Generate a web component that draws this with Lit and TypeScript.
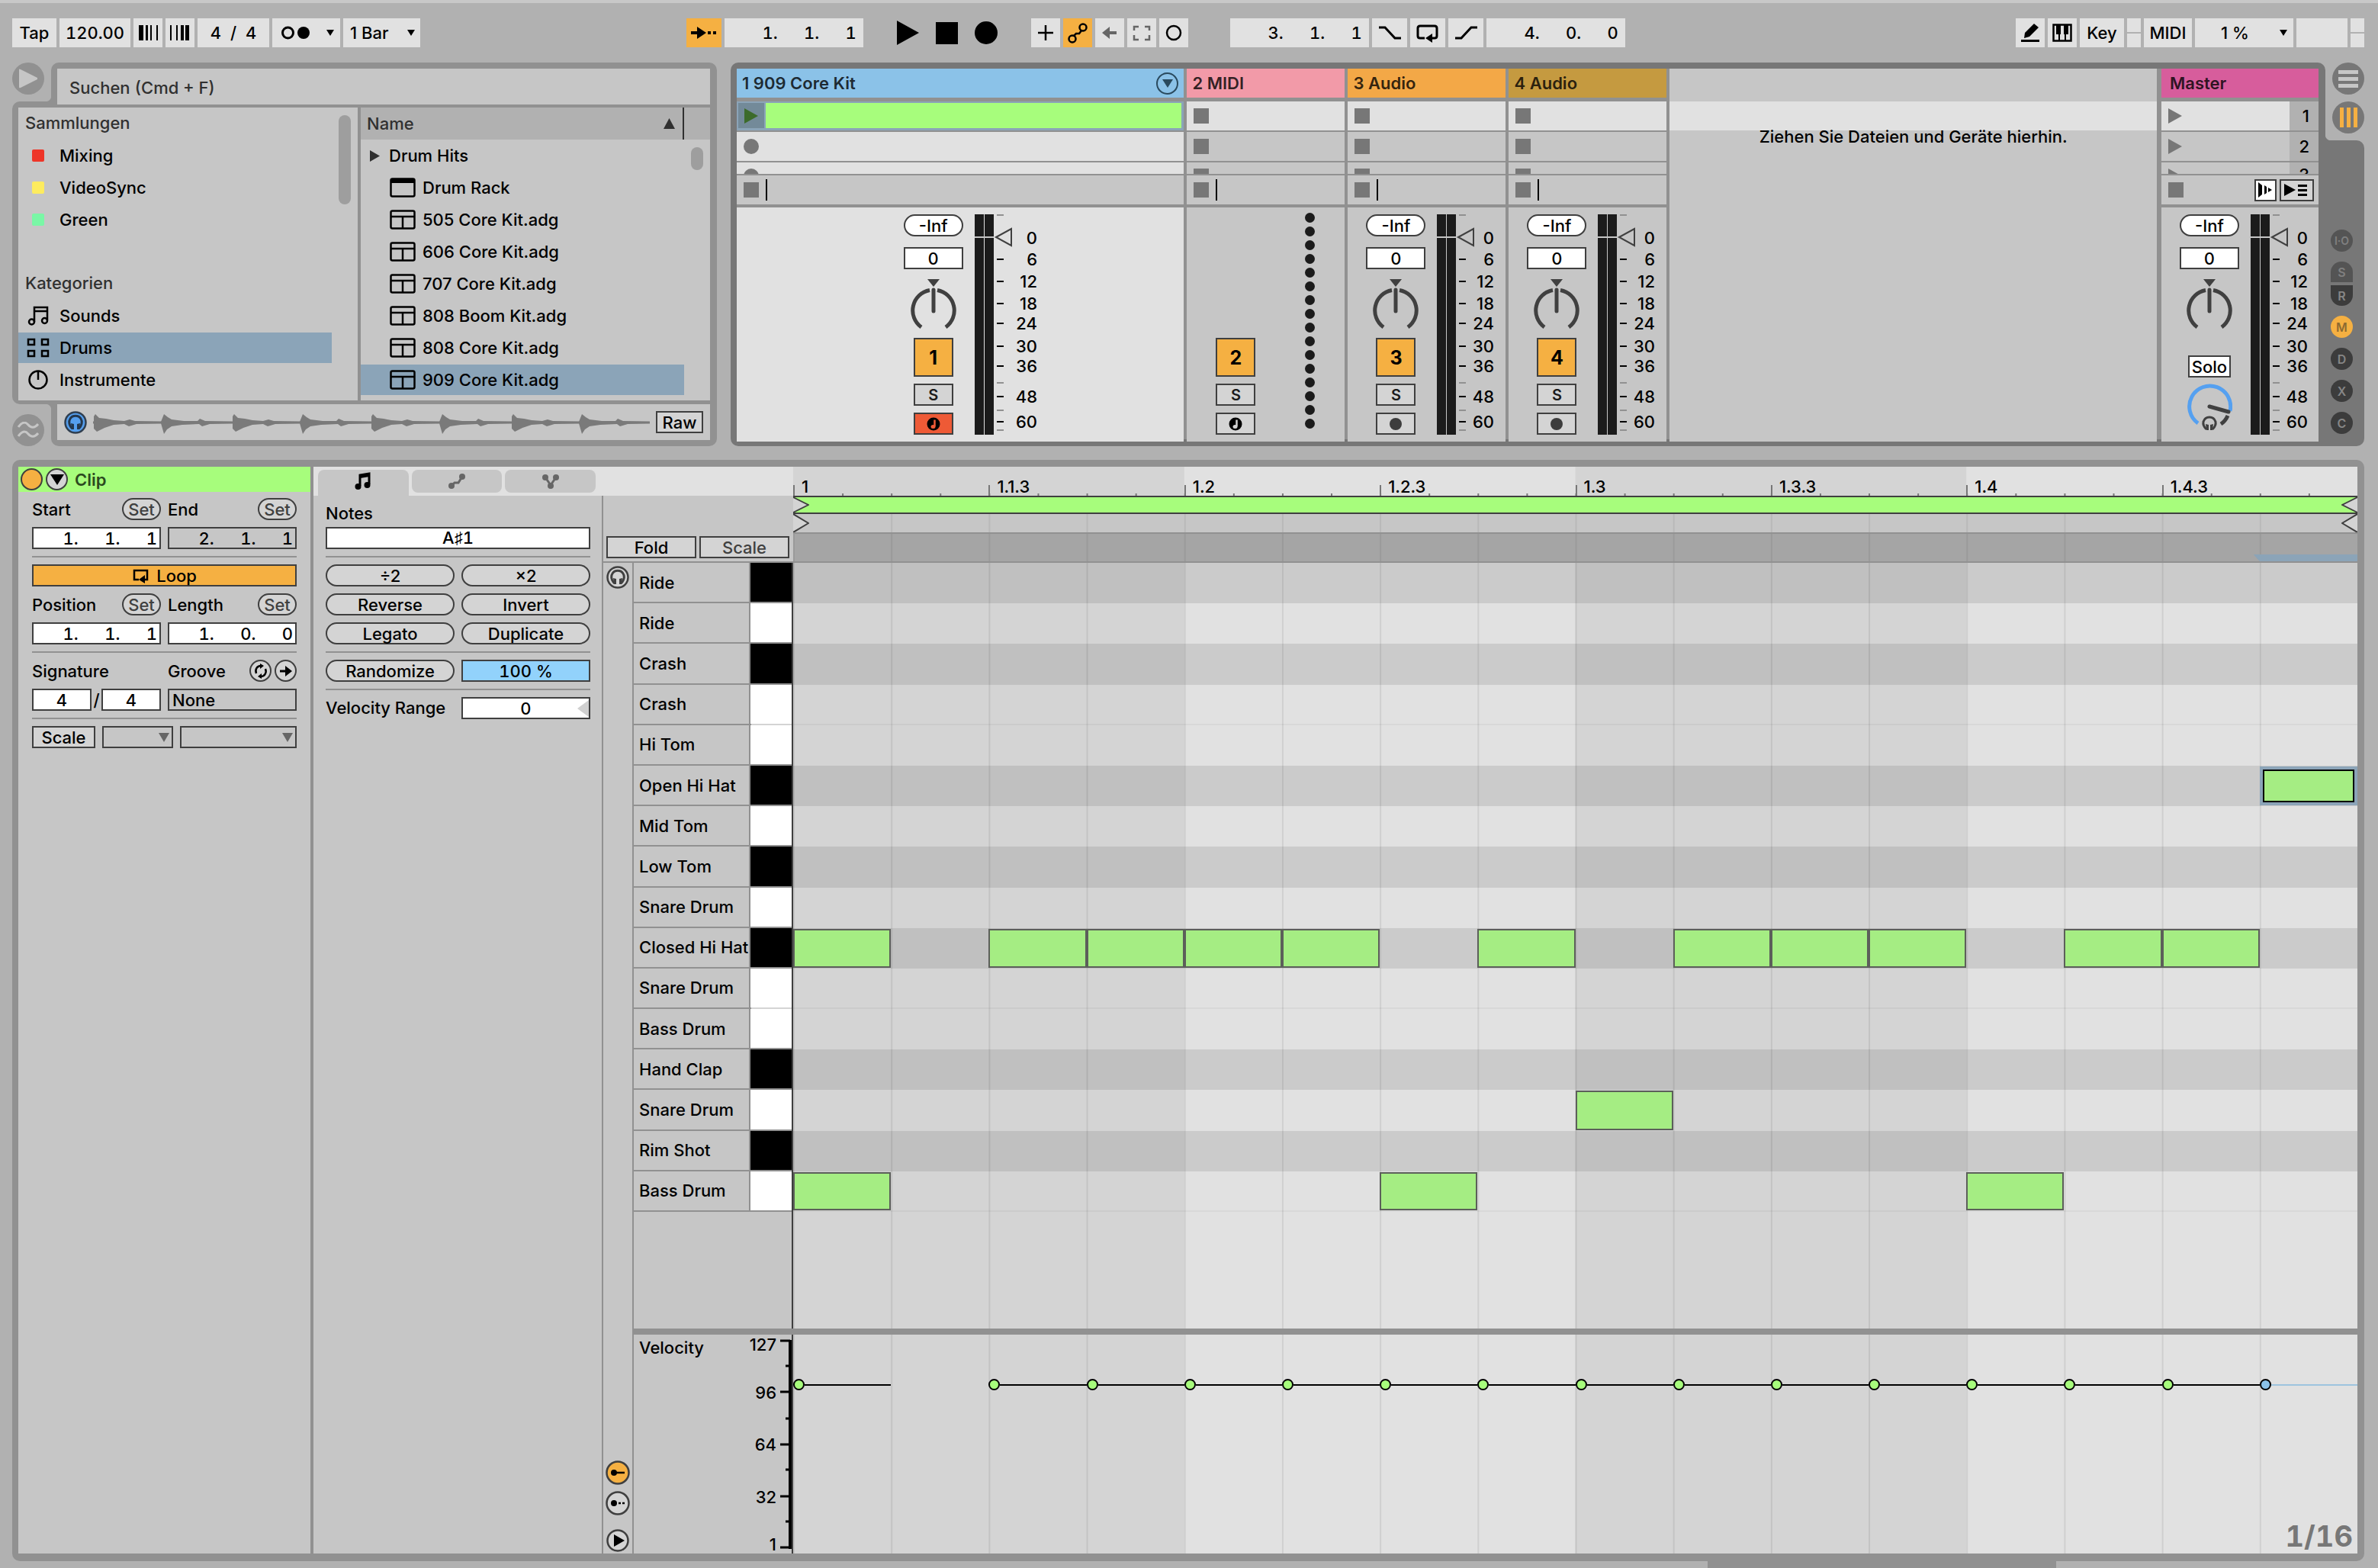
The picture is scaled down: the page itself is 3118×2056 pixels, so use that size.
import { LitElement, html, css, svg, nothing } from "lit";
import { customElement } from "lit/decorators.js";
import { classMap } from "lit/directives/class-map.js";

/* ---------- data ---------- */

const LANES: { name: string; black: boolean; steps: number[] }[] = [
  { name: "Ride", black: true, steps: [] },
  { name: "Ride", black: false, steps: [] },
  { name: "Crash", black: true, steps: [] },
  { name: "Crash", black: false, steps: [] },
  { name: "Hi Tom", black: false, steps: [] },
  { name: "Open Hi Hat", black: true, steps: [15] },
  { name: "Mid Tom", black: false, steps: [] },
  { name: "Low Tom", black: true, steps: [] },
  { name: "Snare Drum", black: false, steps: [] },
  { name: "Closed Hi Hat", black: true, steps: [0, 2, 3, 4, 5, 7, 9, 10, 11, 13, 14] },
  { name: "Snare Drum", black: false, steps: [] },
  { name: "Bass Drum", black: false, steps: [] },
  { name: "Hand Clap", black: true, steps: [] },
  { name: "Snare Drum", black: false, steps: [8] },
  { name: "Rim Shot", black: true, steps: [] },
  { name: "Bass Drum", black: false, steps: [0, 6, 12] },
];

const SELECTED_STEP = 15;
const VELOCITY_STEPS = [0, 2, 3, 4, 5, 6, 7, 8, 9, 10, 11, 12, 13, 14, 15];
const RULER = ["1", "1.1.3", "1.2", "1.2.3", "1.3", "1.3.3", "1.4", "1.4.3"];
const FILES = ["505 Core Kit.adg", "606 Core Kit.adg", "707 Core Kit.adg", "808 Boom Kit.adg", "808 Core Kit.adg", "909 Core Kit.adg"];

/* Bars, beats and sixteenths sit in columns: two figure spaces and a word space after each point. */
const position = (...parts: string[]) => parts.join(".\u2007\u2007 ");

/* ---------- icons ---------- */

const icon = (w: number, h: number, body: unknown) =>
  html`<svg width=${w} height=${h} viewBox="0 0 ${w} ${h}" fill="none" stroke="currentColor" stroke-width="2.5" aria-hidden="true">${body}</svg>`;

const nudgeDown = () => icon(38, 38, svg`<g fill="currentColor" stroke="none"><path d="M7 9h6v20H7zM16 9h3v20h-3zM22 9h2v20h-2zM30 9h2v20h-2z"/></g>`);
const nudgeUp = () => icon(38, 38, svg`<g fill="currentColor" stroke="none"><path d="M6 9h2v20H6zM14 9h2v20h-2zM20 9h4v20h-4zM26 9h5v20h-5z"/></g>`);
const caret = (w = 10, h = 8) => html`<svg class="caret" width=${w} height=${h} viewBox="0 0 10 8" preserveAspectRatio="none" aria-hidden="true"><path d="M0 0H10L5 8Z" fill="currentColor"/></svg>`;
const metronome = () => icon(38, 20, svg`<circle cx="8.500" cy="10" r="7" stroke-width="3"/><circle cx="29" cy="10" r="8" fill="currentColor" stroke="none"/>`);
const follow = () => icon(46, 38, svg`<path d="M6 19H18" stroke-width="4"/><path d="M14 11L26 19L14 27Z" fill="currentColor" stroke="none"/><path d="M28 19h4M35 19h4" stroke-width="4"/>`);
const plus = () => icon(38, 38, svg`<path d="M19 9V29M9 19H29"/>`);
const automation = () => icon(38, 38, svg`<circle cx="26" cy="12" r="4.500"/><circle cx="12" cy="27" r="4.500"/><path d="M14 23L17 20H21L24 16"/>`);
const reenable = () => icon(38, 38, svg`<g stroke="#666" fill="#666"><path d="M15 19H28" stroke-width="4"/><path d="M9 19L19 11V27Z" stroke="none"/></g>`);
const capture = () => icon(38, 38, svg`<path d="M9 16V11H15M23 11H29V16M29 22V28H23M15 28H9V22" stroke="#666"/>`);
const ring = () => icon(38, 38, svg`<circle cx="19" cy="19" r="9"/>`);
const punchIn = () => icon(46, 38, svg`<path d="M9 12H17L30 26H38" stroke-width="3"/>`);
const punchOut = () => icon(46, 38, svg`<path d="M9 26H17L30 12H38" stroke-width="3"/>`);
const loopIcon = () => icon(46, 38, svg`<path d="M19 26H13Q10 26 10 23V13Q10 10 13 10H32Q35 10 35 13V23Q35 26 32 26H29" stroke-width="3"/><path d="M29 20V32L20 26Z" fill="currentColor" stroke="none"/>`);
const loopSmall = () => icon(24, 20, svg`<path d="M9 15H3V3H20V15H15"/><path d="M17 9V20L9 15Z" fill="currentColor" stroke="none"/>`);
const pencil = () => icon(38, 38, svg`<path d="M7 29.500H31" stroke-width="3"/><path d="M11 26L12 19L24 7L30 12L18 24Z" fill="currentColor" stroke="none"/>`);
const keyboard = () => icon(38, 38, svg`<rect x="7.500" y="8.500" width="23" height="21"/><path d="M15 19V30M23 19V30" stroke-width="2"/><path d="M11 8H17V21H11zM21 8H27V21H21z" fill="currentColor" stroke="none"/>`);
const headphones = (stroke: string, fill: string, inner: string) => html`<svg width="30" height="30" viewBox="0 0 30 30" fill="none" aria-hidden="true"><circle cx="15" cy="15" r="13.500" fill=${fill} stroke=${stroke} stroke-width="2.500"/><path d="M11 23C6 19 6 13 8 10C11 5 19 5 22 10C24 13 24 19 19 23" stroke=${inner} stroke-width="3"/><path d="M9 16L13 17V24H10ZM21 16L17 17V24H20Z" fill=${inner}/></svg>`;
const rackIcon = () => icon(34, 26, svg`<rect x="1.500" y="1.500" width="31" height="23" rx="2"/><path d="M2 2H32V7H2Z" fill="currentColor" stroke="none"/>`);
const kitIcon = () => icon(34, 26, svg`<rect x="1.500" y="1.500" width="31" height="23" rx="2"/><path d="M2 9H32M17 9V24"/>`);
const notesIcon = () => icon(30, 26, svg`<path d="M10 21V2H27V19M10 7H27"/><circle cx="6.500" cy="21" r="3.500"/><circle cx="23.500" cy="19.500" r="3.500"/>`);
const padsIcon = () => icon(30, 26, svg`<path d="M2 2H10V9H2zM20 2H28V9H20zM2 17H10V24H2zM20 17H28V24H20z"/>`);
const dialIcon = () => icon(30, 26, svg`<circle cx="15" cy="13" r="11.500"/><path d="M15 2V13"/>`);
const noteTab = () => icon(26, 24, svg`<path d="M9 18V4L21 2V16" stroke-width="3"/><path d="M9 6L21 4" stroke-width="4"/><circle cx="6.500" cy="19" r="4" fill="currentColor" stroke="none"/><circle cx="18.500" cy="17" r="4" fill="currentColor" stroke="none"/>`);
const envelopeTab = () => icon(24, 22, svg`<g fill="currentColor"><circle cx="5" cy="17" r="4" stroke="none"/><circle cx="19" cy="5" r="4" stroke="none"/></g><path d="M5 17L9 13H14L19 5" stroke-width="3"/>`);
const chanceTab = () => icon(24, 20, svg`<g fill="currentColor" stroke="none"><circle cx="5" cy="5" r="4"/><circle cx="19" cy="5" r="4"/><circle cx="12" cy="16" r="4"/></g><path d="M5 5L12 15L19 5" stroke-width="3"/>`);
const playTri = (fill: string) => html`<svg width="18" height="20" viewBox="0 0 18 20" aria-hidden="true"><path d="M0 0L18 10L0 20Z" fill=${fill}/></svg>`;
const armMidi = () => html`<svg width="18" height="18" viewBox="0 0 18 18" aria-hidden="true"><circle cx="9" cy="9" r="8.500" fill="#000"/><path d="M10.500 3.500V12" stroke="currentColor" stroke-width="2.500"/><ellipse cx="8.500" cy="12.500" rx="3" ry="2.500" fill="currentColor"/></svg>`;
const armAudio = () => html`<svg width="18" height="18" viewBox="0 0 18 18" aria-hidden="true"><circle cx="9" cy="9" r="8" fill="#3d3d3d"/></svg>`;
const panKnob = () => html`<svg width="60" height="66" viewBox="0 0 60 66" fill="none" stroke="#404040" aria-hidden="true"><path d="M22 0H38L30 10Z" fill="#404040" stroke="none"/><path d="M14 63A27 27 0 0 1 25 14.500M35 14.500A27 27 0 0 1 46 63" stroke-width="5"/><path d="M30 14V42" stroke-width="5" stroke-linecap="round"/></svg>`;
const cueKnob = () => html`<svg width="60" height="66" viewBox="0 0 60 66" fill="none" aria-hidden="true"><path d="M15 53A27 27 0 1 1 57 37" stroke="#55a0f0" stroke-width="5"/><path d="M30 31L55 38" stroke="#404040" stroke-width="5" stroke-linecap="round"/><path d="M54 43Q51 50 45 54" stroke="#404040" stroke-width="5"/><path d="M26 61Q21 56 22 51Q24 45 30 45Q36 45 38 51Q39 56 34 61" stroke="#404040" stroke-width="3"/><path d="M25 54L29 55V62H26ZM35 54L31 55V62H34Z" fill="#404040"/></svg>`;

/* A level meter with its decibel scale. `w` leaves more room for the numbers on a wide track. */
const SCALE: [string, number][] = [["0", 31], ["6", 59], ["12", 88], ["18", 117], ["24", 143], ["30", 173], ["36", 199], ["48", 239], ["60", 272]];
const meter = (w: number) => html`<svg class="meter" width=${w} height="289" viewBox="0 0 ${w} 289" aria-label="Pegel">
  <path d="M0 0H12V289H0zM13 0H25V289H13z" fill="#1b1b1b"/>
  <path d="M0 30H25" stroke="#c6c6c6" stroke-width="2"/>
  <path d="M28 30L48 19V41Z" fill="none" stroke="#404040" stroke-width="2"/>
  ${SCALE.map(([label, y]) => svg`${label === "0" ? nothing : svg`<path d="M29 ${y}h9" stroke="#000" stroke-width="2"/>`}
    <text x=${w} y=${y} text-anchor="end" dominant-baseline="central">${label}</text>`)}
  ${[1, 221, 257, 283].map((y) => svg`<path d="M29 ${y}h9" stroke="#919191" stroke-width="2"/>`)}
</svg>`;

const waveform = () => {
  const hit = (x: number, soft: boolean) => soft
    ? `M${x - 4} 19L${x} 9L${x + 5} 13L${x + 10} 16L${x + 26} 18L${x + 44} 18L${x + 47} 15L${x + 54} 18L${x + 90} 19V21L${x + 60} 22L${x + 50} 25L${x + 46} 22L${x + 24} 23L${x + 10} 25L${x + 4} 29L${x} 35L${x - 4} 21Z`
    : `M${x} 20V12L${x + 2} 9L${x + 7} 14L${x + 16} 15L${x + 26} 17L${x + 40} 18L${x + 47} 16L${x + 54} 18L${x + 90} 19V21L${x + 56} 22L${x + 46} 25L${x + 40} 22L${x + 26} 23L${x + 14} 27L${x + 4} 32L${x} 28Z`;
  return html`<svg class="wave" viewBox="0 0 730 40" preserveAspectRatio="none" aria-hidden="true"><path d="M0 20H730" stroke="#7a7a7a" stroke-width="3"/>${[0, 92, 182, 274, 364, 457, 548, 640].map((x, i) => svg`<path d=${hit(x + 1, i % 2 === 1)} fill="#7a7a7a"/>`)}</svg>`;
};

/* ---------- shared styles ---------- */

const base = css`
  :host { display: block; min-width: 0; }
  * { box-sizing: border-box; }
  button, input, select { font: inherit; color: inherit; margin: 0; padding: 0; border: 0; border-radius: 0; background: none; appearance: none; min-width: 0; outline: none; }
  button { display: flex; align-items: center; justify-content: center; white-space: nowrap; }
  svg { display: block; flex: none; }
  .box { height: 29px; border: 2px solid #3f3f3f; background: #d4d4d4; }
  .white { background: #fff; }
  .pill { border-radius: 15px; }
  .orange { background: #f5b042; }
  input { white-space: pre; font-variant-numeric: tabular-nums; }
`;

/* ---------- transport ---------- */

@customElement("live-transport")
export class LiveTransport extends LitElement {
  static styles = [base, css`
    .bar { display: flex; height: 78px; padding: 20px 18px 0 16px; border-top: 4px solid #c8c8c8; align-items: flex-start; }
    .group { display: flex; gap: 4px; }
    .cell { height: 38px; background: #e1e1e1; }
    .orange { background: #f5b042; }
    .s38 { width: 38px; }
    .s46 { width: 46px; }
    .tap { width: 58px; }
    .tempo { width: 93px; text-align: center; }
    .sig { width: 94px; text-align: center; }
    .click { width: 89px; justify-content: space-between; padding: 0 8px 0 12px; }
    .drop { display: grid; align-items: center; }
    .drop > * { grid-area: 1 / 1; }
    .drop .caret { justify-self: end; margin-right: 7px; pointer-events: none; }
    .drop select { height: 38px; width: 100%; }
    .bars { width: 101px; padding-left: 9px; }
    .cpu { width: 129px; }
    .cpu select { padding-left: 34px; }
    .cpu .caret { margin-right: 8px; }
    .pos { width: 182px; text-align: right; padding-right: 9px; }
    .keys { display: flex; gap: 22px; padding: 0 44px; height: 38px; align-items: center; }
    .gap-left { flex: 348; }
    .gap-right { flex: 511; }
    .gap-loop { width: 47px; }
    .key { width: 58px; }
    .midi { width: 63px; }
    .led { width: 18px; height: 38px; display: grid; gap: 2px; grid-template-rows: 1fr 1fr; }
    .led i { background: #e1e1e1; }
    .disk { width: 67px; }
  `];
  render() {
    return html`<header class="bar">
      <div class="group">
        <button class="cell tap">Tap</button>
        <input class="cell tempo" aria-label="Tempo" value="120.00">
        <button class="cell s38" aria-label="Langsamer">${nudgeDown()}</button>
        <button class="cell s38" aria-label="Schneller">${nudgeUp()}</button>
        <input class="cell sig" aria-label="Taktart" value="4  /  4">
        <button class="cell click" aria-label="Metronom">${metronome()}${caret()}</button>
        <label class="cell drop bars"><select aria-label="Quantisierung"><option>1 Bar</option></select>${caret()}</label>
      </div>
      <div class="gap-left"></div>
      <div class="group">
        <button class="cell s46 orange" aria-label="Folgen">${follow()}</button>
        <input class="cell pos" aria-label="Position" value=${position("1", "1", "1")}>
      </div>
      <div class="keys">
        <button aria-label="Wiedergabe"><svg width="29" height="32" viewBox="0 0 29 32"><path d="M0 0L29 16L0 32Z"/></svg></button>
        <button aria-label="Stopp"><svg width="29" height="29" viewBox="0 0 29 29"><path d="M0 0H29V29H0Z"/></svg></button>
        <button aria-label="Aufnahme"><svg width="30" height="30" viewBox="0 0 30 30"><circle cx="15" cy="15" r="15"/></svg></button>
      </div>
      <div class="group">
        <button class="cell s38" aria-label="Overdub">${plus()}</button>
        <button class="cell s38 orange" aria-label="Automation">${automation()}</button>
        <button class="cell s38" aria-label="Automation reaktivieren">${reenable()}</button>
        <button class="cell s38" aria-label="Capture">${capture()}</button>
        <button class="cell s38" aria-label="Session-Aufnahme">${ring()}</button>
        <div class="gap-loop"></div>
        <input class="cell pos" aria-label="Loop-Start" value=${position("3", "1", "1")}>
        <button class="cell s46" aria-label="Punch-In">${punchIn()}</button>
        <button class="cell s46" aria-label="Loop">${loopIcon()}</button>
        <button class="cell s46" aria-label="Punch-Out">${punchOut()}</button>
        <input class="cell pos" aria-label="Loop-Länge" value=${position("4", "0", "0")}>
      </div>
      <div class="gap-right"></div>
      <div class="group">
        <button class="cell s38" aria-label="Stift">${pencil()}</button>
        <button class="cell s38" aria-label="Tastatur">${keyboard()}</button>
        <button class="cell key">Key</button>
        <div class="led"><i></i><i></i></div>
        <button class="cell midi">MIDI</button>
        <label class="cell drop cpu"><select aria-label="CPU"><option>1 %</option></select>${caret()}</label>
        <div class="cell disk"></div>
        <div class="led"><i></i><i></i></div>
      </div>
    </header>`;
  }
}

/* ---------- browser ---------- */

@customElement("live-browser")
export class LiveBrowser extends LitElement {
  static styles = [base, css`
    .line { display: flex; }
    .corner { width: 51px; flex: none; display: flex; }
    .corner.top { align-items: flex-start; background: radial-gradient(circle at 0 0, transparent 8px, #919191 9px) right bottom / 8px 8px no-repeat; }
    .corner.bottom { align-items: flex-end; background: radial-gradient(circle at 0 100%, transparent 8px, #919191 9px) right top / 8px 8px no-repeat; }
    .round { width: 42px; height: 42px; border-radius: 50%; background: #919191; }
    .search, .preview { flex: 1; min-width: 0; background: #919191; }
    .search { position: relative; padding: 8px 9px 0 8px; border-radius: 10px 10px 0 0; height: 51px; }
    .search input { display: block; width: 100%; height: 47px; background: #c6c6c6; padding: 2px 16px 0; }
    .search input::placeholder { color: #303030; opacity: 1; }
    .preview { padding: 0 9px 8px 8px; border-radius: 0 0 10px 10px; }
    .inner { display: flex; align-items: center; gap: 8px; height: 47px; background: #c6c6c6; padding: 0 9px; }
    .wave { flex: 1; min-width: 0; height: 40px; }
    .raw { width: 62px; }
    .body { display: grid; grid-template-columns: minmax(0, 445fr) minmax(0, 458fr); gap: 4px; background: #919191; padding: 8px 9px 5px 8px; border-radius: 10px 0 0 10px; height: 397px; }
    .pane { background: #c6c6c6; display: grid; grid-template-columns: minmax(0, 1fr) 34px; align-content: start; height: 384px; }
    .thumb { width: 16px; border-radius: 8px; background: #9e9e9e; justify-self: center; margin-top: 10px; }
    .tall { height: 117px; }
    .short { height: 30px; }
    ul { list-style: none; margin: 0; padding: 0; }
    li { height: 42px; padding: 1px 0; }
    li button { width: 100%; height: 40px; justify-content: flex-start; }
    .head { color: #303030; padding: 0 9px; line-height: 41px; }
    .ico { width: 34px; margin: 0 11px 0 9px; display: flex; justify-content: center; flex: none; }
    .cat { padding-left: 0; }
    .sw { width: 16px; height: 16px; border-radius: 2px; }
    .on { background: #8ba4b8; }
    .red { background: #ee3528; } .yellow { background: #fdec5f; } .mint { background: #7af7a6; }
    .title { height: 42px; background: #b1b1b1; color: #303030; display: flex; align-items: center; justify-content: space-between; padding: 0 10px 0 8px; border-right: 2px solid #303030; }
    .rest { background: #b1b1b1; }
    .folder { padding-left: 12px; gap: 12px; }
    .file { padding-left: 38px; gap: 9px; }
  `];
  render() {
    const cat = (name: string, ico: unknown, on = false) =>
      html`<li><button class=${classMap({ cat: true, on })}><span class="ico">${ico}</span>${name}</button></li>`;
    return html`<section aria-label="Browser">
      <div class="line">
        <div class="corner top"><button class="round" aria-label="Browser zeigen"><svg width="24" height="26" viewBox="0 0 24 26"><path d="M0 1Q0 0 2 1L24 12V14L2 25Q0 26 0 24Z" fill="#c6c6c6"/></svg></button></div>
        <div class="search"><input type="search" aria-label="Suchen" placeholder="Suchen (Cmd + F)"></div>
      </div>
      <div class="body">
        <div class="pane">
          <ul>
            <li class="head">Sammlungen</li>
            ${cat("Mixing", html`<i class="sw red"></i>`)}
            ${cat("VideoSync", html`<i class="sw yellow"></i>`)}
            ${cat("Green", html`<i class="sw mint"></i>`)}
            <li></li>
            <li class="head">Kategorien</li>
            ${cat("Sounds", notesIcon())}
            ${cat("Drums", padsIcon(), true)}
            ${cat("Instrumente", dialIcon())}
          </ul>
          <div class="thumb tall"></div>
        </div>
        <div class="pane">
          <div class="title">Name<svg width="15" height="14" viewBox="0 0 15 14"><path d="M0 14L7.500 0L15 14Z" fill="#303030"/></svg></div>
          <div class="rest"></div>
          <ul>
            <li><button class="folder"><svg width="13" height="15" viewBox="0 0 13 15"><path d="M0 0L13 7.500L0 15Z" fill="#303030"/></svg>Drum Hits</button></li>
            <li><button class="file">${rackIcon()}Drum Rack</button></li>
            ${FILES.map((f, i) => html`<li><button class=${classMap({ file: true, on: i === FILES.length - 1 })}>${kitIcon()}${f}</button></li>`)}
          </ul>
          <div class="thumb short"></div>
        </div>
      </div>
      <div class="line">
        <div class="corner bottom"><button class="round" aria-label="Groove-Pool"><svg width="28" height="22" viewBox="0 0 28 22" fill="none" stroke="#c6c6c6" stroke-width="3"><path d="M1 7Q8 -3 14 4T27 3M1 19Q8 9 14 16T27 15"/></svg></button></div>
        <div class="preview"><div class="inner">
          <button aria-label="Vorhören">${headphones("#303f50", "#559fee", "#24374c")}</button>
          ${waveform()}
          <button class="box raw">Raw</button>
        </div></div>
      </div>
    </section>`;
  }
}

/* ---------- mixer ---------- */

@customElement("live-session")
export class LiveSession extends LitElement {
  static styles = [base, css`
    .frame { display: grid; grid-template-columns: minmax(0, 1fr) 51px; height: 503px; }
    .panel { background: #777; border-radius: 10px 10px 0 10px; padding: 8px 9px 9px 8px; }
    .tracks { display: grid; grid-template-columns: minmax(0, 586fr) 207px 207px 207px minmax(0, 640fr) 206px; column-gap: 4px; background: #919191; height: 486px; }
    .track { display: flex; flex-direction: column; min-width: 0; }
    .title { height: 38px; margin-bottom: 5px; padding: 0 7px; display: flex; align-items: center; justify-content: space-between; font-weight: 600; color: #0009; flex: none; }
    .title span { color: #000c; }
    .blue { background: #8bc2e8; } .pink { background: #f29aa8; } .amber { background: #f3a847; } .ochre { background: #c59a40; }
    .magenta { background: #d75d9c; padding-left: 11px; }
    .fold { width: 29px; height: 29px; border-radius: 50%; border: 2px solid #2a4a5e; color: #2a4a5e; }
    .slot { height: 38px; margin-bottom: 2px; background: #c6c6c6; display: flex; align-items: center; padding-left: 9px; flex: none; }
    .slot.lit { background: #e1e1e1; }
    .slot.cut { height: 15px; align-items: flex-start; padding-top: 8px; overflow: hidden; }
    .slot.stop { margin-bottom: 4px; gap: 9px; }
    .slot.clip { padding: 2px 3px 3px 2px; background: #8ba4b8; gap: 2px; }
    .launch { width: 34px; height: 33px; background: #738a99; }
    .green { flex: 1; height: 33px; background: #a7fd7c; }
    .sq { width: 20px; height: 20px; background: #777; flex: none; }
    .dot { border-radius: 50%; }
    .cursor { width: 2px; height: 28px; background: #000; }
    .strip { flex: 1; display: flex; background: #c6c6c6; padding: 9px 14px 0 24px; align-items: flex-start; }
    .strip.wide { background: #e1e1e1; justify-content: center; padding: 9px 0 0 26px; }
    .controls { width: 78px; display: flex; flex-direction: column; align-items: center; margin-right: 15px; }
    .controls .val { width: 78px; text-align: center; margin-bottom: 13px; }
    .inf { width: 78px; margin-bottom: 14px; }
    .num { width: 52px; height: 51px; border: 2px solid #3f3f3f; background: #f5b042; font-size: 25px; font-weight: 700; margin: 11px 0 9px; }
    .small { width: 52px; font-size: 20px; font-weight: 600; margin-bottom: 9px; color: #1b1b1b; }
    .arm { color: #d4d4d4; }
    .arm.red { background: #ee5a36; color: #ee5a36; }
    .meter { font-size: 22px; }
    .midi { display: flex; flex: 1; background: #c6c6c6; padding: 7px 0 0 38px; align-items: flex-start; }
    .midi .controls { width: 52px; margin: 153px 65px 0 0; }
    .leds { display: grid; gap: 5px; }
    .leds i { width: 13px; height: 13px; border-radius: 50%; background: #1b1b1b; }
    .drop { background: #c6c6c6; padding-top: 43px; margin-right: 2px; text-align: center; }
    .drop div { height: 38px; background: #e1e1e1; }
    .drop p { margin: 0; line-height: 16px; }
    .scene { padding-right: 0; justify-content: space-between; }
    .scene b { width: 38px; align-self: stretch; background: #b1b1b1; font-weight: 500; display: flex; align-items: center; justify-content: flex-end; padding-right: 12px; }
    .scene.cut b { margin-top: -8px; align-items: flex-start; line-height: 22px; padding-top: 5px; }
    .gap { flex: 1; }
    .b1 { width: 29px; } .b2 { width: 45px; margin: 0 6px 0 4px; }
    .slot.stop.master { gap: 0; }
    .solo { width: 56px; margin: 34px 0 7px; }
    .side { display: flex; flex-direction: column; }
    .side .round { width: 42px; height: 42px; border-radius: 50%; background: #777; margin: 0 0 9px 9px; }
    .modes { flex: 1; background: #777; border-radius: 0 10px 10px 0; display: flex; flex-direction: column; align-items: center; padding: 117px 8px 0 0; }
    .modes button { width: 29px; height: 29px; border-radius: 50%; background: #3c3c3c; color: #868686; font-size: 16px; font-weight: 600; margin-bottom: 13px; flex: none; }
    .modes .dim { background: #545454; color: #808080; }
    .modes .io { font-size: 14px; }
    .modes .s { border-radius: 14px 14px 0 0; height: 27px; margin-bottom: 4px; }
    .modes .r { border-radius: 0 0 14px 14px; height: 27px; }
    .modes .m { background: #f5b042; color: #8d6a31; }
    .elbow { height: 0; }
    .elbow i { display: block; width: 8px; height: 8px; margin-top: -8px; background: radial-gradient(circle at 100% 0, transparent 8px, #777 9px); }
  `];
  private slots(main: boolean) {
    const sq = html`<i class="sq"></i>`;
    return html`
      ${main
        ? html`<div class="slot clip"><button class="launch" aria-label="Clip starten">${playTri("#3c6b2b")}</button><div class="green"></div></div>
          <div class="slot lit"><i class="sq dot"></i></div><div class="slot lit cut"><i class="sq dot"></i></div>`
        : html`<div class="slot lit">${sq}</div><div class="slot">${sq}</div><div class="slot cut">${sq}</div>`}
      <div class="slot stop">${sq}<i class="cursor"></i></div>`;
  }
  private strip(n: string, wide: boolean) {
    return html`<div class=${classMap({ strip: true, wide })}>
      <div class="controls">
        <button class="box white pill inf">-Inf</button>
        <input class="box white val" aria-label="Lautstärke" value="0">
        ${panKnob()}
        <button class="num">${n}</button>
        <button class="box small">S</button>
        ${wide ? html`<button class="box small arm red" aria-label="Scharfschalten">${armMidi()}</button>` : html`<button class="box small" aria-label="Scharfschalten">${armAudio()}</button>`}
      </div>
      ${meter(wide ? 82 : 75)}
    </div>`;
  }
  render() {
    return html`<section class="frame" aria-label="Session">
      <div class="panel"><div class="tracks">
        <div class="track">
          <div class="title blue"><span>1 909 Core Kit</span><button class="fold" aria-label="Aufklappen">${caret(14, 11)}</button></div>
          ${this.slots(true)}${this.strip("1", true)}
        </div>
        <div class="track">
          <div class="title pink"><span>2 MIDI</span></div>
          ${this.slots(false)}
          <div class="midi">
            <div class="controls"><button class="num">2</button><button class="box small">S</button><button class="box small arm" aria-label="Scharfschalten">${armMidi()}</button></div>
            <div class="leds">${Array.from({ length: 16 }, () => html`<i></i>`)}</div>
          </div>
        </div>
        <div class="track"><div class="title amber"><span>3 Audio</span></div>${this.slots(false)}${this.strip("3", false)}</div>
        <div class="track"><div class="title ochre"><span>4 Audio</span></div>${this.slots(false)}${this.strip("4", false)}</div>
        <div class="drop"><div></div><p>Ziehen Sie Dateien und Geräte hierhin.</p></div>
        <div class="track">
          <div class="title magenta"><span>Master</span></div>
          <div class="slot lit scene">${playTri("#777")}<b>1</b></div>
          <div class="slot scene">${playTri("#777")}<b>2</b></div>
          <div class="slot cut scene">${playTri("#777")}<b>3</b></div>
          <div class="slot stop master"><i class="sq"></i><span class="gap"></span>
            <button class="box white b1" aria-label="Stopp alle"><svg width="20" height="20" viewBox="0 0 20 20"><path d="M1 0L6 4V16L1 20ZM9 4L12 6V14L9 16ZM14 7L19 10L14 13Z"/></svg></button>
            <button class="box b2" aria-label="Zurück zum Arrangement"><svg width="32" height="16" viewBox="0 0 32 16"><path d="M0 0L15 8L0 16ZM18 1H30V4H18ZM18 7H30V10H18ZM18 13H30V16H18Z"/></svg></button>
          </div>
          <div class="strip"><div class="controls">
            <button class="box white pill inf">-Inf</button>
            <input class="box white val" aria-label="Lautstärke" value="0">
            ${panKnob()}
            <button class="box white solo">Solo</button>
            ${cueKnob()}
          </div>${meter(75)}</div>
        </div>
      </div></div>
      <nav class="side" aria-label="Ansicht">
        <button class="round" aria-label="Arrangement"><svg width="26" height="23" viewBox="0 0 26 23"><path d="M0 0H26V5H0ZM0 9H26V14H0ZM0 18H26V23H0Z" fill="#c6c6c6"/></svg></button>
        <button class="round" aria-label="Session"><svg width="23" height="26" viewBox="0 0 23 26"><path d="M0 0H5V26H0ZM9 0H14V26H9ZM18 0H23V26H18Z" fill="#f5b042"/></svg></button>
        <div class="elbow"><i></i></div>
        <div class="modes">
          <button class="dim io">I·O</button><button class="dim s">S</button><button class="r">R</button><button class="m">M</button><button>D</button><button>X</button><button>C</button>
        </div>
      </nav>
    </section>`;
  }
}

/* ---------- clip view ---------- */

@customElement("live-clip")
export class LiveClip extends LitElement {
  static styles = [base, css`
    :host { display: flex; gap: 4px; background: #919191; }
    .clip { width: 383px; background: #c6c6c6; }
    .title { height: 33px; background: #a7fd7c; display: flex; align-items: center; gap: 4px; padding-left: 3px; font-weight: 600; color: #2c4a20; }
    .title span { margin-left: 5px; }
    .disc { width: 29px; height: 29px; border-radius: 50%; border: 2px solid #3f3f3f; background: #d4d4d4; color: #000; }
    .title .orange { background: #f5b042; }
    .form { display: grid; grid-template-columns: 169px 169px; gap: 9px; padding: 8px 18px; align-items: center; }
    .pair { display: flex; justify-content: space-between; align-items: center; height: 29px; }
    .set { width: 51px; color: #404040; }
    .form hr, .notes hr { grid-column: 1 / -1; width: 100%; border: 0; height: 2px; margin: 0; background: #919191; }
    .num { width: 100%; text-align: right; padding-right: 3px; }
    .grey { background: #c6c6c6; }
    .full { grid-column: 1 / -1; gap: 8px; }
    .mid { text-align: center; width: 78px; }
    .left { text-align: left; padding-left: 4px; }
    .scales { grid-column: 1 / -1; display: grid; grid-template-columns: 83px 93px 1fr; gap: 9px; }
    .drop { display: grid; align-items: center; }
    .drop > * { grid-area: 1 / 1; }
    .drop select { width: 100%; height: 25px; }
    .drop .caret { justify-self: end; margin-right: 3px; color: #666; pointer-events: none; }
    .circles { display: flex; gap: 4px; }
    .tools { width: 380px; background: #c6c6c6; display: flex; flex-direction: column; }
    .tabs { height: 38px; background: #e1e1e1; display: flex; gap: 4px; padding: 4px 10px 0 6px; }
    .tabs button { flex: 1; height: 30px; border-radius: 8px; background: #c6c6c6; color: #666; }
    .tabs .active { height: 34px; border-radius: 8px 8px 0 0; color: #000; padding-bottom: 4px; }
    .notes { flex: 1; border-right: 2px solid #919191; display: grid; grid-template-columns: 169px 169px; gap: 9px; padding: 8px 16px; align-content: start; }
    .notes .label { grid-column: 1 / -1; line-height: 30px; height: 24px; }
    .wide { grid-column: 1 / -1; text-align: center; width: 100%; }
    .val { text-align: center; width: 100%; }
    .azure { background: #92d2fb; }
    .range { line-height: 29px; white-space: nowrap; }
    .slide { display: grid; align-items: center; }
    .slide > * { grid-area: 1 / 1; }
    .slide svg { justify-self: end; margin-right: 2px; }
  `];
  render() {
    const set = html`<button class="box pill set">Set</button>`;
    return html`
      <section class="clip" aria-label="Clip">
        <div class="title"><button class="disc orange" aria-label="Clip aktiv"></button><button class="disc" aria-label="Aufklappen">${caret(18, 14)}</button><span>Clip</span></div>
        <div class="form">
          <div class="pair"><label for="start">Start</label>${set}</div>
          <div class="pair"><label for="end">End</label>${set}</div>
          <input id="start" class="box white num" value=${position("1", "1", "1")}>
          <input id="end" class="box grey num" value=${position("2", "1", "1")}>
          <hr>
          <button class="box orange full">${loopSmall()}Loop</button>
          <div class="pair"><label for="position">Position</label>${set}</div>
          <div class="pair"><label for="length">Length</label>${set}</div>
          <input id="position" class="box white num" value=${position("1", "1", "1")}>
          <input id="length" class="box white num" value=${position("1", "0", "0")}>
          <hr>
          <label for="numerator">Signature</label>
          <div class="pair"><label for="groove">Groove</label><div class="circles">
            <button class="disc" aria-label="Groove tauschen">${icon(20, 20, svg`<path d="M4 13C2 8 5 3 10 3M16 7C18 12 15 17 10 17"/><path d="M9 0L14 3L9 7ZM11 13L6 17L11 20Z" fill="currentColor" stroke="none"/>`)}</button>
            <button class="disc" aria-label="Groove anwenden">${icon(18, 16, svg`<path d="M1 8H10" stroke-width="3"/><path d="M8 1L17 8L8 15Z" fill="currentColor" stroke="none"/>`)}</button>
          </div></div>
          <div class="pair"><input id="numerator" class="box white mid" value="4">/<input class="box white mid" aria-label="Nenner" value="4"></div>
          <input id="groove" class="box grey num left" value="None">
          <hr>
          <div class="scales">
            <button class="box">Scale</button>
            <label class="box grey drop"><select aria-label="Grundton"><option></option></select>${caret(14, 12)}</label>
            <label class="box grey drop"><select aria-label="Skala"><option></option></select>${caret(14, 12)}</label>
          </div>
        </div>
      </section>
      <section class="tools" aria-label="Noten">
        <div class="tabs">
          <button class="active" aria-label="Noten">${noteTab()}</button>
          <button aria-label="Hüllkurven">${envelopeTab()}</button>
          <button aria-label="Expression">${chanceTab()}</button>
        </div>
        <div class="notes">
          <label class="label" for="pitch">Notes</label>
          <input id="pitch" class="box white wide" value="A♯1">
          <hr>
          <button class="box pill">÷2</button><button class="box pill">×2</button>
          <button class="box pill">Reverse</button><button class="box pill">Invert</button>
          <button class="box pill">Legato</button><button class="box pill">Duplicate</button>
          <hr>
          <button class="box pill">Randomize</button><input class="box azure val" aria-label="Randomize" value="100 %">
          <hr>
          <label class="range" for="range">Velocity Range</label>
          <div class="slide"><input id="range" class="box white val" value="0"><svg width="15" height="22" viewBox="0 0 15 22"><path d="M0 11L15 0V22Z" fill="#d0d0d0"/></svg></div>
        </div>
      </section>`;
  }
}

/* ---------- piano roll ---------- */

const VELOCITIES: [string, number, number][] = [["127", 8, 13], ["96", 75, 76], ["64", 144, 144], ["32", 212, 213], ["1", 279, 275]];

@customElement("live-roll")
export class LiveRoll extends LitElement {
  static styles = [base, css`
    :host { display: grid; }
    .roll { display: grid; grid-template-columns: 40px 209px minmax(0, 1fr); grid-template-rows: 126px minmax(851px, 1fr) 8px 287px; background: #c6c6c6; }
    .corner { grid-column: 1 / 3; border-bottom: 2px solid #919191; display: flex; flex-direction: column; justify-content: space-between; }
    .band { height: 38px; background: #e1e1e1; }
    .modes { display: grid; grid-template-columns: 1fr 1fr; gap: 4px; padding: 0 5px 4px 4px; }
    .modes .off { color: #404040; }
    .ruler { display: grid; grid-template-rows: 38px 24px 26px 38px; }
    .marks { display: grid; grid-template-columns: repeat(8, 1fr); align-items: end;
      background:
        linear-gradient(90deg, #777 2px, transparent 2px) 0 100% / 3.125% 3px repeat-x,
        linear-gradient(90deg, #d4d4d4 50%, #e1e1e1 50%) 0 0 / 50% 100%; }
    .marks span { height: 14px; border-left: 2px solid #777; padding-left: 9px; line-height: 4px; }
    .loop { display: flex; justify-content: space-between; background: #a7fd7c; border: solid #3f3f3f; border-width: 2px 0; }
    .region { display: flex; justify-content: space-between; border-bottom: 2px solid #919191; background: linear-gradient(90deg, #0001 2px, transparent 2px) 0 0 / 6.25% 100%; }
    .scrub { display: flex; justify-content: flex-end; align-items: flex-end; background: linear-gradient(90deg, #0001 2px, transparent 2px) 0 0 / 6.25% 100%, #a5a5a5; border-bottom: 2px solid #919191; }
    .scrub i { width: calc(6.25% + 8px); height: 9px; background: #8ba4b8; clip-path: polygon(0 0, 100% 0, 100% 100%, 8px 100%); }
    .tools { grid-row: 2 / 5; border-right: 2px solid #919191; display: flex; flex-direction: column; align-items: center; padding: 4px 0 2px; }
    .tools .push { flex: 1; }
    .tools button { margin-bottom: 8px; }
    .tools .last { margin: 10px 0 0; }
    .names { border-right: 2px solid #3f3f3f; }
    .rows { display: grid; grid-template-rows: repeat(16, 1fr); height: 851px; }
    .name { display: grid; grid-template-columns: 153px 1fr; border-bottom: 2px solid #919191; }
    .name span { border-right: 2px solid #919191; padding-left: 7px; display: flex; align-items: center; white-space: nowrap; overflow: hidden; }
    .key { display: block; background: #fff; }
    .name.black .key { background: #000; }
    .name.soft { border-image: linear-gradient(90deg, #919191 153px, #d4d4d4 153px) 2; }
    .canvas { background: linear-gradient(90deg, #00000014 2px, transparent 2px) 0 0 / 6.25% 100%, linear-gradient(90deg, #d4d4d4 50%, #e1e1e1 50%) 0 0 / 50% 100%; }
    .lane { display: grid; grid-template-columns: repeat(16, minmax(0, 1fr)); padding: 1px 0; }
    .lane.black { background: #00000018; }
    .lane.line { border-bottom: 2px solid #0000000a; padding-bottom: 0; }
    .note { background: #a5ed83; border: 2px solid #5c5f5a; }
    .note.sel { border: 2px solid #000; background: #a5ed83; box-shadow: 0 0 0 4px #8ba4b8; margin: 4px; }
    .split { grid-column: 2 / 4; background: #919191; }
    .axis { display: flex; justify-content: space-between; padding-left: 7px; border-right: 2px solid #3f3f3f; }
    .axis span { line-height: 34px; }
    .axis svg { font-size: 22px; }
    .velocity { display: flex; flex-direction: column; justify-content: space-between; }
    .points { display: grid; grid-template-columns: repeat(16, minmax(0, 1fr)); padding-top: 58px; }
    .point { display: flex; align-items: center; }
    .point i { width: 15px; height: 15px; border-radius: 50%; background: #a7fd7c; border: 2px solid #000; flex: none; }
    .point::after { content: ""; flex: 1; height: 2px; background: #000; }
    .point.sel i { background: #8bc2e8; }
    .point.sel::after { background: #9dc4df; }
    .grid { align-self: flex-end; font-size: 38px; font-weight: 700; font-variant-numeric: tabular-nums; color: #777; line-height: 46px; padding-right: 6px; }
  `];
  render() {
    const arrow = (left: boolean, h: number, fill: string) => html`<svg width="21" height=${h} viewBox="0 0 21 24" preserveAspectRatio="none"><path d=${left ? "M0 0L20 12L0 24" : "M21 0L1 12L21 24"} fill=${fill} stroke="#3f3f3f" stroke-width="2"/></svg>`;
    return html`<section class="roll" aria-label="Piano Roll">
      <div class="corner"><div class="band"></div><div class="modes"><button class="box">Fold</button><button class="box off">Scale</button></div></div>
      <div class="ruler">
        <div class="marks">${RULER.map((r) => html`<span>${r}</span>`)}</div>
        <div class="loop">${arrow(true, 20, "#d4d4d4")}${arrow(false, 20, "#d4d4d4")}</div>
        <div class="region">${arrow(true, 24, "#d4d4d4")}${arrow(false, 24, "#d4d4d4")}</div>
        <div class="scrub"><i></i></div>
      </div>
      <div class="tools">
        <button aria-label="Vorhören">${headphones("#404040", "#d4d4d4", "#404040")}</button>
        <span class="push"></span>
        <button aria-label="Velocity">${icon(32, 32, svg`<circle cx="16" cy="16" r="14.500" fill="#f5b042" stroke="#3f3f3f"/><circle cx="11" cy="16" r="4" fill="#000" stroke="none"/><path d="M11 16H25"/>`)}</button>
        <button aria-label="Chance">${icon(32, 32, svg`<circle cx="16" cy="16" r="14.500" fill="#d4d4d4" stroke="#3f3f3f"/><circle cx="11" cy="16" r="4" fill="#000" stroke="none"/><path d="M17 16H20M22 16H25"/>`)}</button>
        <button class="last" aria-label="Lanes einblenden">${icon(30, 30, svg`<circle cx="15" cy="15" r="13.500" fill="#d4d4d4" stroke="#3f3f3f"/><path d="M10 7L24 15L10 23Z" fill="#000" stroke="none"/>`)}</button>
      </div>
      <div class="names"><div class="rows">
        ${LANES.map((l, i) => html`<div class=${classMap({ name: true, black: l.black, soft: !l.black && !!LANES[i + 1] && !LANES[i + 1].black })}><span>${l.name}</span><i class="key"></i></div>`)}
      </div></div>
      <div class="canvas"><div class="rows">
        ${LANES.map((l, i) => html`<div class=${classMap({ lane: true, black: l.black, line: !l.black && !LANES[i + 1]?.black })}>
          ${l.steps.map((s) => html`<i class=${classMap({ note: true, sel: s === SELECTED_STEP })} style="grid-column:${s + 1}"></i>`)}
        </div>`)}
      </div></div>
      <div class="split"></div>
      <div class="axis"><span>Velocity</span>
        <svg width="90" height="287" viewBox="0 0 90 287" stroke="#000" stroke-width="3">
          <path d="M88 7V281" fill="none" stroke-width="4"/>
          ${VELOCITIES.map(([t, y, ty]) => svg`<path d="M75 ${y}H88"/><text x="70" y=${ty} text-anchor="end" dominant-baseline="central" stroke="none">${t}</text>`)}
          ${[41, 110, 177, 245].map((y) => svg`<path d="M82 ${y}H88"/>`)}
        </svg>
      </div>
      <div class="velocity canvas">
        <div class="points">${VELOCITY_STEPS.map((s) => html`<i class=${classMap({ point: true, sel: s === SELECTED_STEP })} style="grid-column:${s + 1}"><i></i></i>`)}</div>
        <div class="grid">1/16</div>
      </div>
    </section>`;
  }
}

/* ---------- page ---------- */

@customElement("app-root")
export class AppRoot extends LitElement {
  static styles = css`
    :host { display: flex; flex-direction: column; min-height: 100vh; box-sizing: border-box; background: #b1b1b1; color: #000; font: 500 22px/26px Inter, "Liberation Sans", sans-serif; }
    .top { display: grid; grid-template-columns: minmax(0, 924fr) minmax(0, 2142fr); gap: 18px; padding: 4px 18px 18px 16px; }
    .editor { flex: 1; display: grid; grid-template-columns: auto minmax(0, 1fr); margin: 0 18px 0 16px; border: solid #919191; border-width: 9px 9px 10px 8px; border-radius: 10px; }
    .foot { height: 9px; display: grid; grid-template-columns: 2239fr 457fr 422fr; }
    .foot i { grid-column: 2; background: #919191; }
  `;
  render() {
    return html`
      <live-transport></live-transport>
      <div class="top"><live-browser></live-browser><live-session></live-session></div>
      <main class="editor"><live-clip></live-clip><live-roll></live-roll></main>
      <div class="foot"><i></i></div>`;
  }
}
